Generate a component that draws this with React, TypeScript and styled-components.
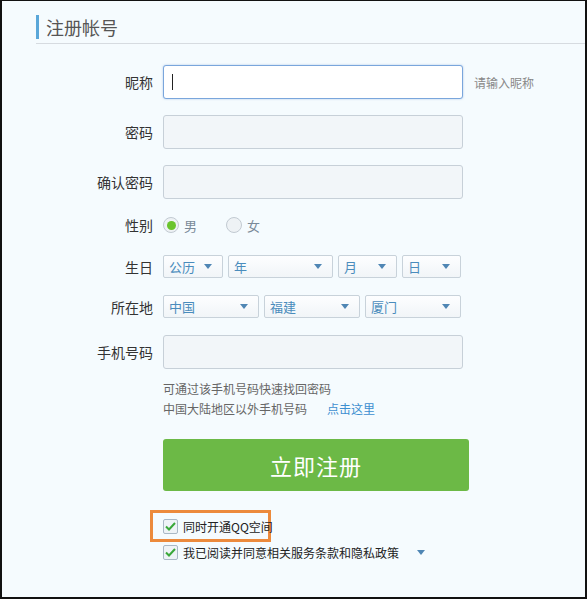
import React from 'react'
import styled, { createGlobalStyle } from 'styled-components'

const Global = createGlobalStyle`
  html, body { margin: 0; padding: 0; background: #f5fbfe; }
  body { font-family: "Noto Sans CJK SC", "Noto Sans", sans-serif; }
`

const Page = styled.div`
  box-sizing: border-box;
  width: 587px;
  height: 599px;
  background: #f5fbfe;
  border-top: 1px solid #111;
  border-left: 2px solid #111;
  border-right: 2px solid #111;
  border-bottom: 2px solid #111;
  overflow: hidden;
`

const Header = styled.div`
  margin-left: 34px;
  padding-top: 14px;
  padding-bottom: 4px;
  border-bottom: 1px solid #d6dbe0;
`

const Title = styled.h1`
  margin: 0;
  height: 24px;
  display: flex;
  align-items: center;
  border-left: 3px solid #5aa7d9;
  padding-left: 7px;
  font-size: 18px;
  font-weight: normal;
  color: #555;
`

const Form = styled.div`
  display: flex;
  flex-direction: column;
  padding-top: 21px;
`

const Row = styled.div<{ $top: number; $h: number }>`
  display: grid;
  grid-template-columns: 151px auto;
  column-gap: 10px;
  align-items: center;
  margin-top: ${p => p.$top}px;
  height: ${p => p.$h}px;
`

const Label = styled.label`
  text-align: right;
  font-size: 14px;
  color: #333;
`

const Field = styled.div`
  display: flex;
  align-items: center;
  gap: 5px;
`

const Input = styled.div<{ $focus?: boolean }>`
  box-sizing: border-box;
  width: 300px;
  height: 34px;
  border: 1px solid ${p => (p.$focus ? '#7aa6dc' : '#c7d0d8')};
  background: ${p => (p.$focus ? '#fff' : '#f2f6f9')};
  border-radius: 3px;
  box-shadow: ${p => (p.$focus ? '0 0 2px rgba(90,140,210,0.5)' : 'none')};
  display: flex;
  align-items: center;
  padding-left: 8px;
`

const Caret = styled.span`
  width: 1px;
  height: 16px;
  background: #222;
`

const Hint = styled.span`
  margin-left: 6px;
  font-size: 12px;
  color: #888;
  white-space: nowrap;
`

const Radio = styled.span<{ $on?: boolean }>`
  box-sizing: border-box;
  width: 16px;
  height: 16px;
  border-radius: 50%;
  border: 1px solid #c2cad2;
  background: #eef2f5;
  display: inline-flex;
  align-items: center;
  justify-content: center;
  &::after {
    content: '';
    display: ${p => (p.$on ? 'block' : 'none')};
    width: 9px;
    height: 9px;
    border-radius: 50%;
    background: #6ac42d;
  }
`

const RadioText = styled.span<{ $w: number }>`
  font-size: 13px;
  color: #7a8a99;
  width: ${p => p.$w}px;
`

const Select = styled.div<{ $w: number }>`
  box-sizing: border-box;
  width: ${p => p.$w}px;
  height: 23px;
  border: 1px solid #c8d2da;
  border-radius: 2px;
  background: linear-gradient(#fdfeff, #f1f5f8);
  display: flex;
  align-items: center;
  justify-content: space-between;
  padding: 0 10px 0 5px;
  font-size: 13px;
  color: #4a8cbc;
  &::after {
    content: '';
    border-left: 4px solid transparent;
    border-right: 4px solid transparent;
    border-top: 5px solid #4f86b4;
  }
`

const Indent = styled.div<{ $top: number }>`
  margin-left: 161px;
  margin-top: ${p => p.$top}px;
`

const Help = styled.div`
  font-size: 12px;
  line-height: 20px;
  color: #666;
`

const Link = styled.a`
  margin-left: 20px;
  color: #3d8fd0;
  text-decoration: none;
`

const Submit = styled.button`
  width: 306px;
  height: 52px;
  border: none;
  border-radius: 3px;
  background: #6cb946;
  color: #fff;
  font-family: inherit;
  font-size: 22px;
  letter-spacing: 1px;
`

const Highlight = styled.div`
  box-sizing: border-box;
  margin-left: 148px;
  margin-top: 19px;
  width: 121px;
  height: 32px;
  border: 3px solid #ec8a3c;
  padding-left: 10px;
  display: flex;
  align-items: center;
`

const CheckRow = styled.div`
  display: flex;
  align-items: center;
  margin-left: 161px;
  margin-top: 2px;
  height: 16px;
`

const Box = styled.span`
  box-sizing: border-box;
  flex-shrink: 0;
  width: 15px;
  height: 15px;
  border: 1px solid #a9b8c6;
  border-radius: 2px;
  background: #eef3f7;
  display: inline-flex;
  align-items: center;
  justify-content: center;
  margin-right: 5px;
`

const CheckText = styled.span`
  font-size: 12px;
  color: #222;
  white-space: nowrap;
`

const Drop = styled.span`
  margin-left: 18px;
  border-left: 4px solid transparent;
  border-right: 4px solid transparent;
  border-top: 5px solid #4f86b4;
`

function Check() {
  return (
    <Box>
      <svg width="11" height="9" viewBox="0 0 11 9">
        <path d="M1 4.5 L4 7.5 L10 1" fill="none" stroke="#3aa83a" strokeWidth="2" />
      </svg>
    </Box>
  )
}

export default function App() {
  return (
    <Page>
      <Global />
      <Header>
        <Title>注册帐号</Title>
      </Header>
      <Form>
        <Row $top={0} $h={34}>
          <Label>昵称</Label>
          <Field>
            <Input $focus><Caret /></Input>
            <Hint>请输入昵称</Hint>
          </Field>
        </Row>
        <Row $top={16} $h={34}>
          <Label>密码</Label>
          <Field><Input /></Field>
        </Row>
        <Row $top={16} $h={34}>
          <Label>确认密码</Label>
          <Field><Input /></Field>
        </Row>
        <Row $top={16} $h={20}>
          <Label>性别</Label>
          <Field>
            <Radio $on />
            <RadioText $w={37}>男</RadioText>
            <Radio />
            <RadioText $w={20}>女</RadioText>
          </Field>
        </Row>
        <Row $top={20} $h={23}>
          <Label>生日</Label>
          <Field>
            <Select $w={60}>公历</Select>
            <Select $w={105}>年</Select>
            <Select $w={59}>月</Select>
            <Select $w={59}>日</Select>
          </Field>
        </Row>
        <Row $top={17} $h={23}>
          <Label>所在地</Label>
          <Field>
            <Select $w={96}>中国</Select>
            <Select $w={96}>福建</Select>
            <Select $w={96}>厦门</Select>
          </Field>
        </Row>
        <Row $top={17} $h={34}>
          <Label>手机号码</Label>
          <Field><Input /></Field>
        </Row>
        <Indent $top={10}>
          <Help>可通过该手机号码快速找回密码</Help>
          <Help>
            中国大陆地区以外手机号码<Link href="#">点击这里</Link>
          </Help>
        </Indent>
        <Indent $top={20}>
          <Submit>立即注册</Submit>
        </Indent>
        <Highlight>
          <Check />
          <CheckText>同时开通QQ空间</CheckText>
        </Highlight>
        <CheckRow>
          <Check />
          <CheckText>我已阅读并同意相关服务条款和隐私政策</CheckText>
          <Drop />
        </CheckRow>
      </Form>
    </Page>
  )
}
